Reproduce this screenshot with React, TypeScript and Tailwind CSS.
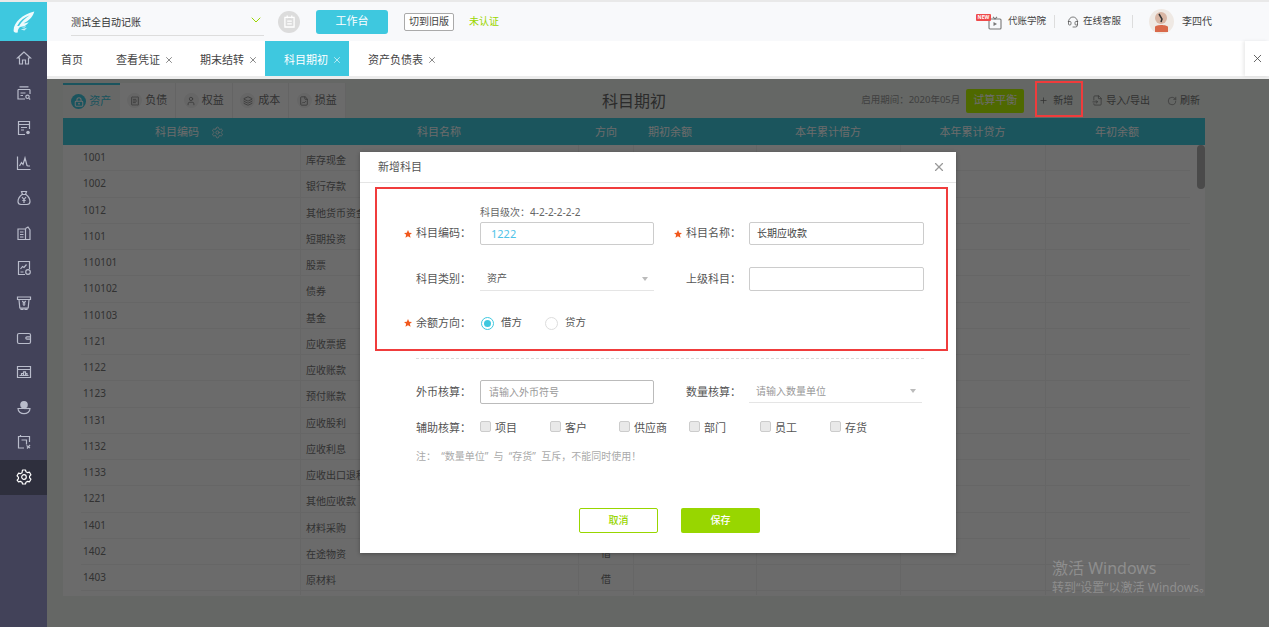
import { ChevronDown, FileInput, Headset, Layers, LockKeyhole, Plus, ReceiptText, RotateCw, Settings, User, X, FileChartLine } from "lucide-react";
import type { ReactNode } from "react";

const ROWS = [
  ["1001", "库存现金"], ["1002", "银行存款"], ["1012", "其他货币资金"], ["1101", "短期投资"],
  ["110101", "股票"], ["110102", "债券"], ["110103", "基金"], ["1121", "应收票据"],
  ["1122", "应收账款"], ["1123", "预付账款"], ["1131", "应收股利"], ["1132", "应收利息"],
  ["1133", "应收出口退税"], ["1221", "其他应收款"], ["1401", "材料采购"], ["1402", "在途物资", "借"], ["1403", "原材料", "借"],
];

// sidebar glyphs, all on a 16 box
const SIDE_PATHS: ReactNode[] = [
  <path key="home" d="M8 2L1.500 8h2v6h3v-4h3v4h3V8h2z" />,
  <g key="query">
    <path d="M3.500 1.800h9M2 4.500h12M2 4.500v9.500h7M14 4.500V9M4.500 8h5M4.500 10.500h2.500" />
    <circle cx="11.500" cy="11.800" r="1.700" />
    <path d="M13 13.300l1.200 1.200" />
  </g>,
  <g key="doc">
    <path d="M9 14.500H2.500v-13h11V9M2.500 4.500h11M5 7.500h6M5 10h3" />
    <circle cx="12" cy="12.500" r="1.800" fill="currentColor" stroke="none" />
  </g>,
  <path key="chart" d="M1.500 1.500v13h13M3.500 11l2-3.500 1.500 2L9 3l2 7.500 1 .5h2" />,
  <g key="bag">
    <path d="M5.500 1.500h5L9.500 4.500h-3zM6 4.500C3.500 6.500 2 9 2 11.500c0 2 1.500 3 3 3h6c1.500 0 3-1 3-3 0-2.500-1.500-5-4-7" />
    <path d="M6 7l2 2.500L10 7M8 9.500V13M6.300 10.500h3.400" />
  </g>,
  <g key="files">
    <path d="M2 4h7.500v10.500H2zM9.500 3.500L12 2l2 3v9.500H9.500M4 7h3.500M4 9.500h3.500M4 12h3.500" />
  </g>,
  <g key="report">
    <path d="M9 14.500H2.500v-13h11V9M4.500 9l2-2.500 1.500 1 2.500-3M4.500 12h3" />
    <circle cx="12" cy="12" r="2.300" />
  </g>,
  <g key="atm">
    <path d="M1.500 2h13v2.500h-13zM3 4.500l.8 8.500h8.400l.8-8.500M5 13v1.500h2V13M9 13v1.500h2V13" />
    <path d="M6.300 6l1.700 2 1.700-2M8 8v3M6.500 9h3" />
  </g>,
  <path key="wallet" d="M13 3.500H3a1.500 1.500 0 0 0-1.500 1.500v7A1.500 1.500 0 0 0 3 13.500h10a1.500 1.500 0 0 0 1.500-1.500V5A1.500 1.500 0 0 0 13 3.500zM14.500 6.800h-3.500a1.200 1.200 0 0 0 0 2.400h3.500" />,
  <g key="board">
    <path d="M1.500 2.500h13v11h-13zM1.500 5.500h13M3.500 11.500h9M5.500 11.500V9.500h2M7.500 11.500V7.800h2v3.700M9.500 9.500h1.500v2" />
  </g>,
  <g key="bowl">
    <path d="M2 9.500a6 5.200 0 0 0 12 0z" />
    <circle cx="8" cy="5.800" r="3.800" fill="currentColor" stroke="none" />
    <path d="M8 9.500h5" />
  </g>,
  <g key="export">
    <path d="M8 14H2.500V2.500h11V8M4.500 1v1.500" />
    <path d="M5.500 6h5v4.500" />
    <path d="M10.500 11.500l3.500 2.500M14 11l-3 3.500" />
  </g>,
  <g key="gear" strokeLinejoin="round">
    <path d="M6.500 1.500h3l.5 1.800 1.700.9 1.800-.5 1.400 2.600-1.300 1.300v1.800l1.300 1.300-1.400 2.600-1.800-.5-1.700.9-.5 1.800h-3l-.5-1.800-1.700-.9-1.800.5L1.100 11.700l1.300-1.300V8.600L1.100 7.300l1.400-2.600 1.800.5L6 4.300z" transform="translate(0 -.5)" />
    <circle cx="8" cy="8" r="2.300" />
  </g>,
];

const Star = () => (
  <svg viewBox="0 0 10 10" className="w-[8px] h-[8px] mr-[4px] shrink-0" fill="#f1581d">
    <path d="M5 0l1.500 3.400 3.500.3-2.700 2.300.9 3.600L5 7.700 1.800 9.600l.9-3.600L0 3.700l3.500-.3z" />
  </svg>
);

const Label = ({ text, star, width = "w-[85px] pr-[9px]" }: { text: string; star?: boolean; width?: string }) => (
  <div className={`${width} shrink-0 flex items-center justify-end text-[11px] text-[#555]`}>
    {star && <Star />}
    {text}：
  </div>
);

const Caret = () => <span className="w-0 h-0 border-x-[3.500px] border-x-transparent border-t-[4px] border-t-[#bbb]" />;

const Check = ({ text, className }: { text: string; className: string }) => (
  <div className={`flex items-center ${className}`}>
    <span className="w-[11px] h-[11px] rounded-[2px] border border-[#ccc] bg-[#e9e9e9] -mt-[3px]" />
    <span className="ml-[4px] text-[11px] text-[#555]">{text}</span>
  </div>
);

const Tab = ({ text, icon, active }: { text: string; icon: ReactNode; active?: boolean }) => (
  <div className={`w-[56.500px] h-full flex items-center justify-center gap-[3px] text-[11px] ${active ? "bg-[#f6f8f6] border-t-2 border-[#3ec8df] text-[#3ec8df]" : "bg-white border-r border-[#eee] text-[#777]"}`}>
    <span className={`w-[15px] h-[15px] rounded-full flex items-center justify-center ${active ? "bg-[#3ec8df] text-white" : "bg-[#f2f2f2] text-[#888]"}`}>{icon}</span>
    {text}
  </div>
);

const PageTab = ({ text, className }: { text: string; className: string }) => (
  <div className={`h-full pt-[3px] flex items-center text-[11px] text-[#444] ${className}`}>
    {text}
    <X size={10} strokeWidth={1.500} className="ml-[4px]" />
  </div>
);

export default function App() {
  return (
    <div className="w-[1269px] h-[627px] overflow-hidden relative flex border-t-2 border-[#e9e9e9] bg-white font-['Noto_Sans','Noto_Sans_CJK_SC',sans-serif]">
      <aside className="w-[47px] shrink-0 bg-[#424259] flex flex-col">
        <div className="h-[39px] bg-[#3ec8df] flex items-center justify-center">
          <svg viewBox="0 0 30 30" className="w-[27px] h-[27px]" fill="#eefafc">
            <path d="M4 25C4 16 14 7 27 4C25 11 20 15 15 17C18 17 20 16 21 15.500C19 19 15 21 11 21C9 23 8 26 9 27C6 28 4 27 4 25Z" />
            <path d="M12 24l7-2-3 3zM13 21.500l5-1.500-2 2z" opacity="0.8" />
            <path d="M8 20C11 14 16 10 22 8C17 11 13 15 10 20Z" fill="#3ec8df" />
          </svg>
        </div>
        {SIDE_PATHS.map((icon, i) => (
          <div key={i} className={`h-[34.900px] shrink-0 flex items-center justify-center ${i === 12 ? "bg-[#2e2f3d] text-white" : "text-[#b9bccb]"}`}>
            <svg viewBox="0 0 16 16" className="w-4 h-4" fill="none" stroke="currentColor" strokeWidth="1.200">{icon}</svg>
          </div>
        ))}
      </aside>

      <div className="flex-1 min-w-0 flex flex-col">
        <header className="h-[39px] bg-[#f8f9fb] flex items-center shrink-0 relative">
          <div className="ml-[24px] w-[193px] h-[26px] mt-[2px] border-b border-[#ddd] flex items-center justify-between text-[10px] text-[#333]">
            测试全自动记账
            <ChevronDown size={16} strokeWidth={1.500} className="text-[#9bd600] -mt-[5px]" />
          </div>
          <div className="ml-[14px] w-[22px] h-[22px] rounded-full bg-[#dcdcdc] flex items-center justify-center">
            <svg viewBox="0 0 12 14" className="w-[11px] h-[13px]" fill="none" stroke="#fff" strokeWidth="1.400">
              <path d="M1 2.500h10v10.500H1zM3.500 .5v3M8.500 .5v3M3.500 6.500h5M3.500 9.500h5" />
            </svg>
          </div>
          <button className="ml-[16px] w-[72px] h-[24px] rounded-[3px] bg-[#3ec8df] text-white text-[11px]">工作台</button>
          <button className="ml-[16px] w-[50px] h-[18px] rounded-[2px] border border-[#aaa] bg-white text-[#444] text-[10px]">切到旧版</button>
          <span className="ml-[15px] text-[10px] text-[#9bd600]">未认证</span>
          <div className="ml-auto flex items-center pr-[57px] text-[9.500px] text-[#444]">
            <div className="relative w-[26px] h-[16px] mr-[6px] flex justify-end">
              <span className="absolute left-0 top-0 w-[15px] h-[7px] bg-[#ef4b4b] rounded-[1px] text-white text-[5px] leading-[7px] text-center font-bold">NEW</span>
              <svg viewBox="0 0 14 14" className="w-[14px] h-[14px] mt-[2px]" fill="none" stroke="#777" strokeWidth="1.100">
                <rect x="1" y="3" width="12" height="10" rx="1" />
                <path d="M5 .8L7 3l2-2.200" />
                <path d="M5.500 6v4l3.500-2z" fill="#777" stroke="none" />
              </svg>
            </div>
            <span>代账学院</span>
            <span className="w-px h-[13px] bg-[#ddd] mx-[8px]" />
            <Headset size={12} strokeWidth={1.500} className="ml-[4px] mr-[4px] text-[#555]" />
            <span>在线客服</span>
            <span className="w-px h-[13px] bg-[#ddd] ml-[11px] mr-[16px]" />
            <svg viewBox="0 0 25 25" className="w-[25px] h-[25px]">
              <circle cx="12.500" cy="12.500" r="12.500" fill="#efe9e4" />
              <circle cx="12" cy="9" r="6" fill="#d9b6a4" />
              <path d="M10 5l3 5-1 3" stroke="#333" strokeWidth="1.500" fill="none" />
              <path d="M6 23v-5c0-1 2-2 6-2s7 1 7 2v5z" fill="#d9694a" />
            </svg>
            <span className="ml-[8px] text-[10px]">李四代</span>
          </div>
        </header>

        <nav className="h-[35px] bg-white shrink-0 flex items-center relative">
          <div className="ml-[14px] w-[55px] pt-[3px] text-[11px] text-[#444]">首页</div>
          <PageTab text="查看凭证" className="w-[84px]" />
          <PageTab text="期末结转" className="w-[65px]" />
          <div className="w-[84px] h-full pt-[3px] bg-[#3ec8df] text-white text-[11px] flex items-center pl-[19px]">
            科目期初
            <X size={10} strokeWidth={1.500} className="ml-[4px]" />
          </div>
          <PageTab text="资产负债表" className="ml-[19px]" />
          <div className="ml-auto w-[24px] h-full bg-white shadow-[-2px_0_3px_rgba(0,0,0,0.08)] flex items-center justify-center text-[#444]">
            <X size={13} strokeWidth={1.500} />
          </div>
        </nav>
        <div className="h-[3px] bg-[#ececec] shrink-0" />

        <main className="flex-1 min-h-0 relative bg-[#f0f5f0] pl-[16px] pr-[64px] pt-[4px]">
          <div className="w-[1142px] h-[513px] flex flex-col">
            <div className="h-[35px] shrink-0 grid grid-cols-[1fr_auto_1fr] items-center">
              <div className="flex h-full">
                <Tab active text="资产" icon={<LockKeyhole size={10} strokeWidth={2.500} />} />
                <Tab text="负债" icon={<ReceiptText size={10} />} />
                <Tab text="权益" icon={<User size={10} />} />
                <Tab text="成本" icon={<Layers size={10} />} />
                <Tab text="损益" icon={<FileChartLine size={10} />} />
              </div>
              <h1 className="text-[16px] text-[#666] leading-none">科目期初</h1>
              <div className="flex items-center justify-end pr-[5px] text-[10px] text-[#777]">
                <span className="text-[9.500px] text-[#999]">启用期间：2020年05月</span>
                <button className="ml-[6px] w-[58px] h-[24px] rounded-[2px] bg-[#bcfb00] text-white text-[11px]">试算平衡</button>
                <span className="ml-[15px] flex items-center gap-[5px]"><Plus size={9} />新增</span>
                <span className="ml-[19px] flex items-center gap-[3px]"><FileInput size={11} strokeWidth={1.500} />导入/导出</span>
                <span className="ml-[17px] flex items-center gap-[3px]"><RotateCw size={10} strokeWidth={1.500} />刷新</span>
              </div>
            </div>
            <div className="h-[27px] pt-[1px] shrink-0 bg-[#40cadd] grid grid-cols-[237px_278px_56px_72px_194px_145px_160px] items-center text-center text-[11px] text-white">
              <div className="pl-[92px] flex items-center gap-[12px]">科目编码<Settings size={13} strokeWidth={1.500} /></div>
              <div>科目名称</div>
              <div>方向</div>
              <div>期初余额</div>
              <div className="pl-[50px]">本年累计借方</div>
              <div>本年累计贷方</div>
              <div className="pr-[16px]">年初余额</div>
            </div>
            <div className="flex-1 min-h-0 bg-white flex pl-[18px]">
              <div className="w-[1109px]">
                {ROWS.map(([code, name, dir]) => (
                  <div key={code} className="h-[26.250px] border-b border-[#f2f2f2] grid grid-cols-[219px_278px_56px_122px_144px_145px_145px] text-[10px] text-[#777]">
                    <div className="pl-[2px] leading-[24px]">{code}</div>
                    <div className="pl-[5px] leading-[30px] border-l border-[#f2f2f2]">{name}</div>
                    <div className="text-center leading-[28px] border-x border-[#f2f2f2]">{dir}</div>
                    <div />
                    <div className="border-l border-[#f2f2f2]" />
                    <div className="border-l border-[#f2f2f2]" />
                    <div className="border-l border-[#f2f2f2]" />
                  </div>
                ))}
              </div>
              <div className="ml-auto w-[8px] h-[44px] rounded-[4px] bg-[#b0b0b0]" />
            </div>
          </div>

          <div className="absolute inset-0 bg-black/58" />

          <section className="absolute left-[313px] top-[73px] w-[596px] h-[401px] bg-white shadow-[0_1px_4px_rgba(0,0,0,0.3)] flex flex-col">
            <div className="h-[31px] shrink-0 border-b border-[#e5e5e5] flex items-center justify-between pl-[18px] pr-[10px] text-[11px] text-[#555]">
              新增科目
              <X size={14} strokeWidth={2} className="text-[#999]" />
            </div>
            <div className="pl-[120px] mt-[23px] h-[12px] text-[10px] leading-[12px] text-[#666]">科目级次：4-2-2-2-2-2</div>
            <div className="mt-[4px] pl-[35px] flex h-[23px]">
              <Label star text="科目编码" />
              <div className="w-[174px] rounded-[2px] border border-[#ccc] pl-[10px] text-[11px] leading-[21px] text-[#4fc3e8]">1222</div>
              <Label star text="科目名称" width="w-[95px] pr-[8px]" />
              <div className="w-[175px] rounded-[2px] border border-[#ccc] pl-[7px] text-[10px] leading-[21px] text-[#444]">长期应收款</div>
            </div>
            <div className="mt-[22px] pl-[35px] flex h-[24px]">
              <Label text="科目类别" />
              <div className="w-[174px] border-b border-[#e5e5e5] pl-[7px] pr-[6px] flex items-center justify-between text-[10px] text-[#555]">资产<Caret /></div>
              <Label text="上级科目" width="w-[95px] pr-[8px]" />
              <div className="w-[175px] rounded-[2px] border border-[#ccc]" />
            </div>
            <div className="mt-[22px] pl-[35px] flex items-center h-[20px]">
              <Label star text="余额方向" />
              <span className="ml-[1px] w-[13px] h-[13px] rounded-full border border-[#3ec8df] flex items-center justify-center">
                <span className="w-[7px] h-[7px] rounded-full bg-[#3ec8df]" />
              </span>
              <span className="ml-[7px] text-[10.500px] text-[#555]">借方</span>
              <span className="ml-[23px] w-[13px] h-[13px] rounded-full border border-[#ddd]" />
              <span className="ml-[7px] text-[10.500px] text-[#555]">贷方</span>
            </div>
            <div className="mt-[25px] ml-[56px] mr-[32px] border-t border-dashed border-[#ddd]" />
            <div className="mt-[21px] pl-[35px] flex h-[24px]">
              <Label text="外币核算" />
              <div className="w-[174px] rounded-[2px] border border-[#bbb] pl-[8px] text-[10px] leading-[22px] text-[#999]">请输入外币符号</div>
              <Label text="数量核算" width="w-[95px] pr-[8px]" />
              <div className="w-[173px] h-[23px] border-b border-[#e5e5e5] pl-[7px] pr-[6px] flex items-center justify-between text-[10px] text-[#999]">请输入数量单位<Caret /></div>
            </div>
            <div className="mt-[14px] pl-[35px] flex items-center h-[20px]">
              <Label text="辅助核算" />
              <Check text="项目" className="w-[70px]" />
              <Check text="客户" className="w-[69px]" />
              <Check text="供应商" className="w-[70px]" />
              <Check text="部门" className="w-[71px]" />
              <Check text="员工" className="w-[70px]" />
              <Check text="存货" className="w-[70px]" />
            </div>
            <div className="mt-[11px] pl-[56px] h-[14px] text-[10px] leading-[14px] text-[#aaa] whitespace-pre">注：  “数量单位”  与  “存货”  互斥，不能同时使用！</div>
            <div className="mt-[45px] flex gap-[23px] pl-[219px]">
              <button className="w-[79px] h-[25px] rounded-[2px] border border-[#98d600] text-[#98d600] text-[10px] font-medium">取消</button>
              <button className="w-[79px] h-[25px] rounded-[2px] bg-[#98d600] text-white text-[10px] font-medium">保存</button>
            </div>
          </section>

          {/* annotation frames drawn on the screenshot */}
          <div className="absolute left-[988px] top-[2px] w-[48px] h-[36px] border-2 border-[#f03c3c]" />
          <div className="absolute left-[328px] top-[108px] w-[573px] h-[164px] border-2 border-[#f03c3c]" />

          <div className="absolute left-[1005px] top-[481px] text-[#8e8e8e] leading-none">
            <div className="text-[16px]">激活 Windows</div>
            <div className="mt-[6px] text-[12px] whitespace-nowrap">转到“设置”以激活 Windows。</div>
          </div>
        </main>
      </div>
    </div>
  );
}
